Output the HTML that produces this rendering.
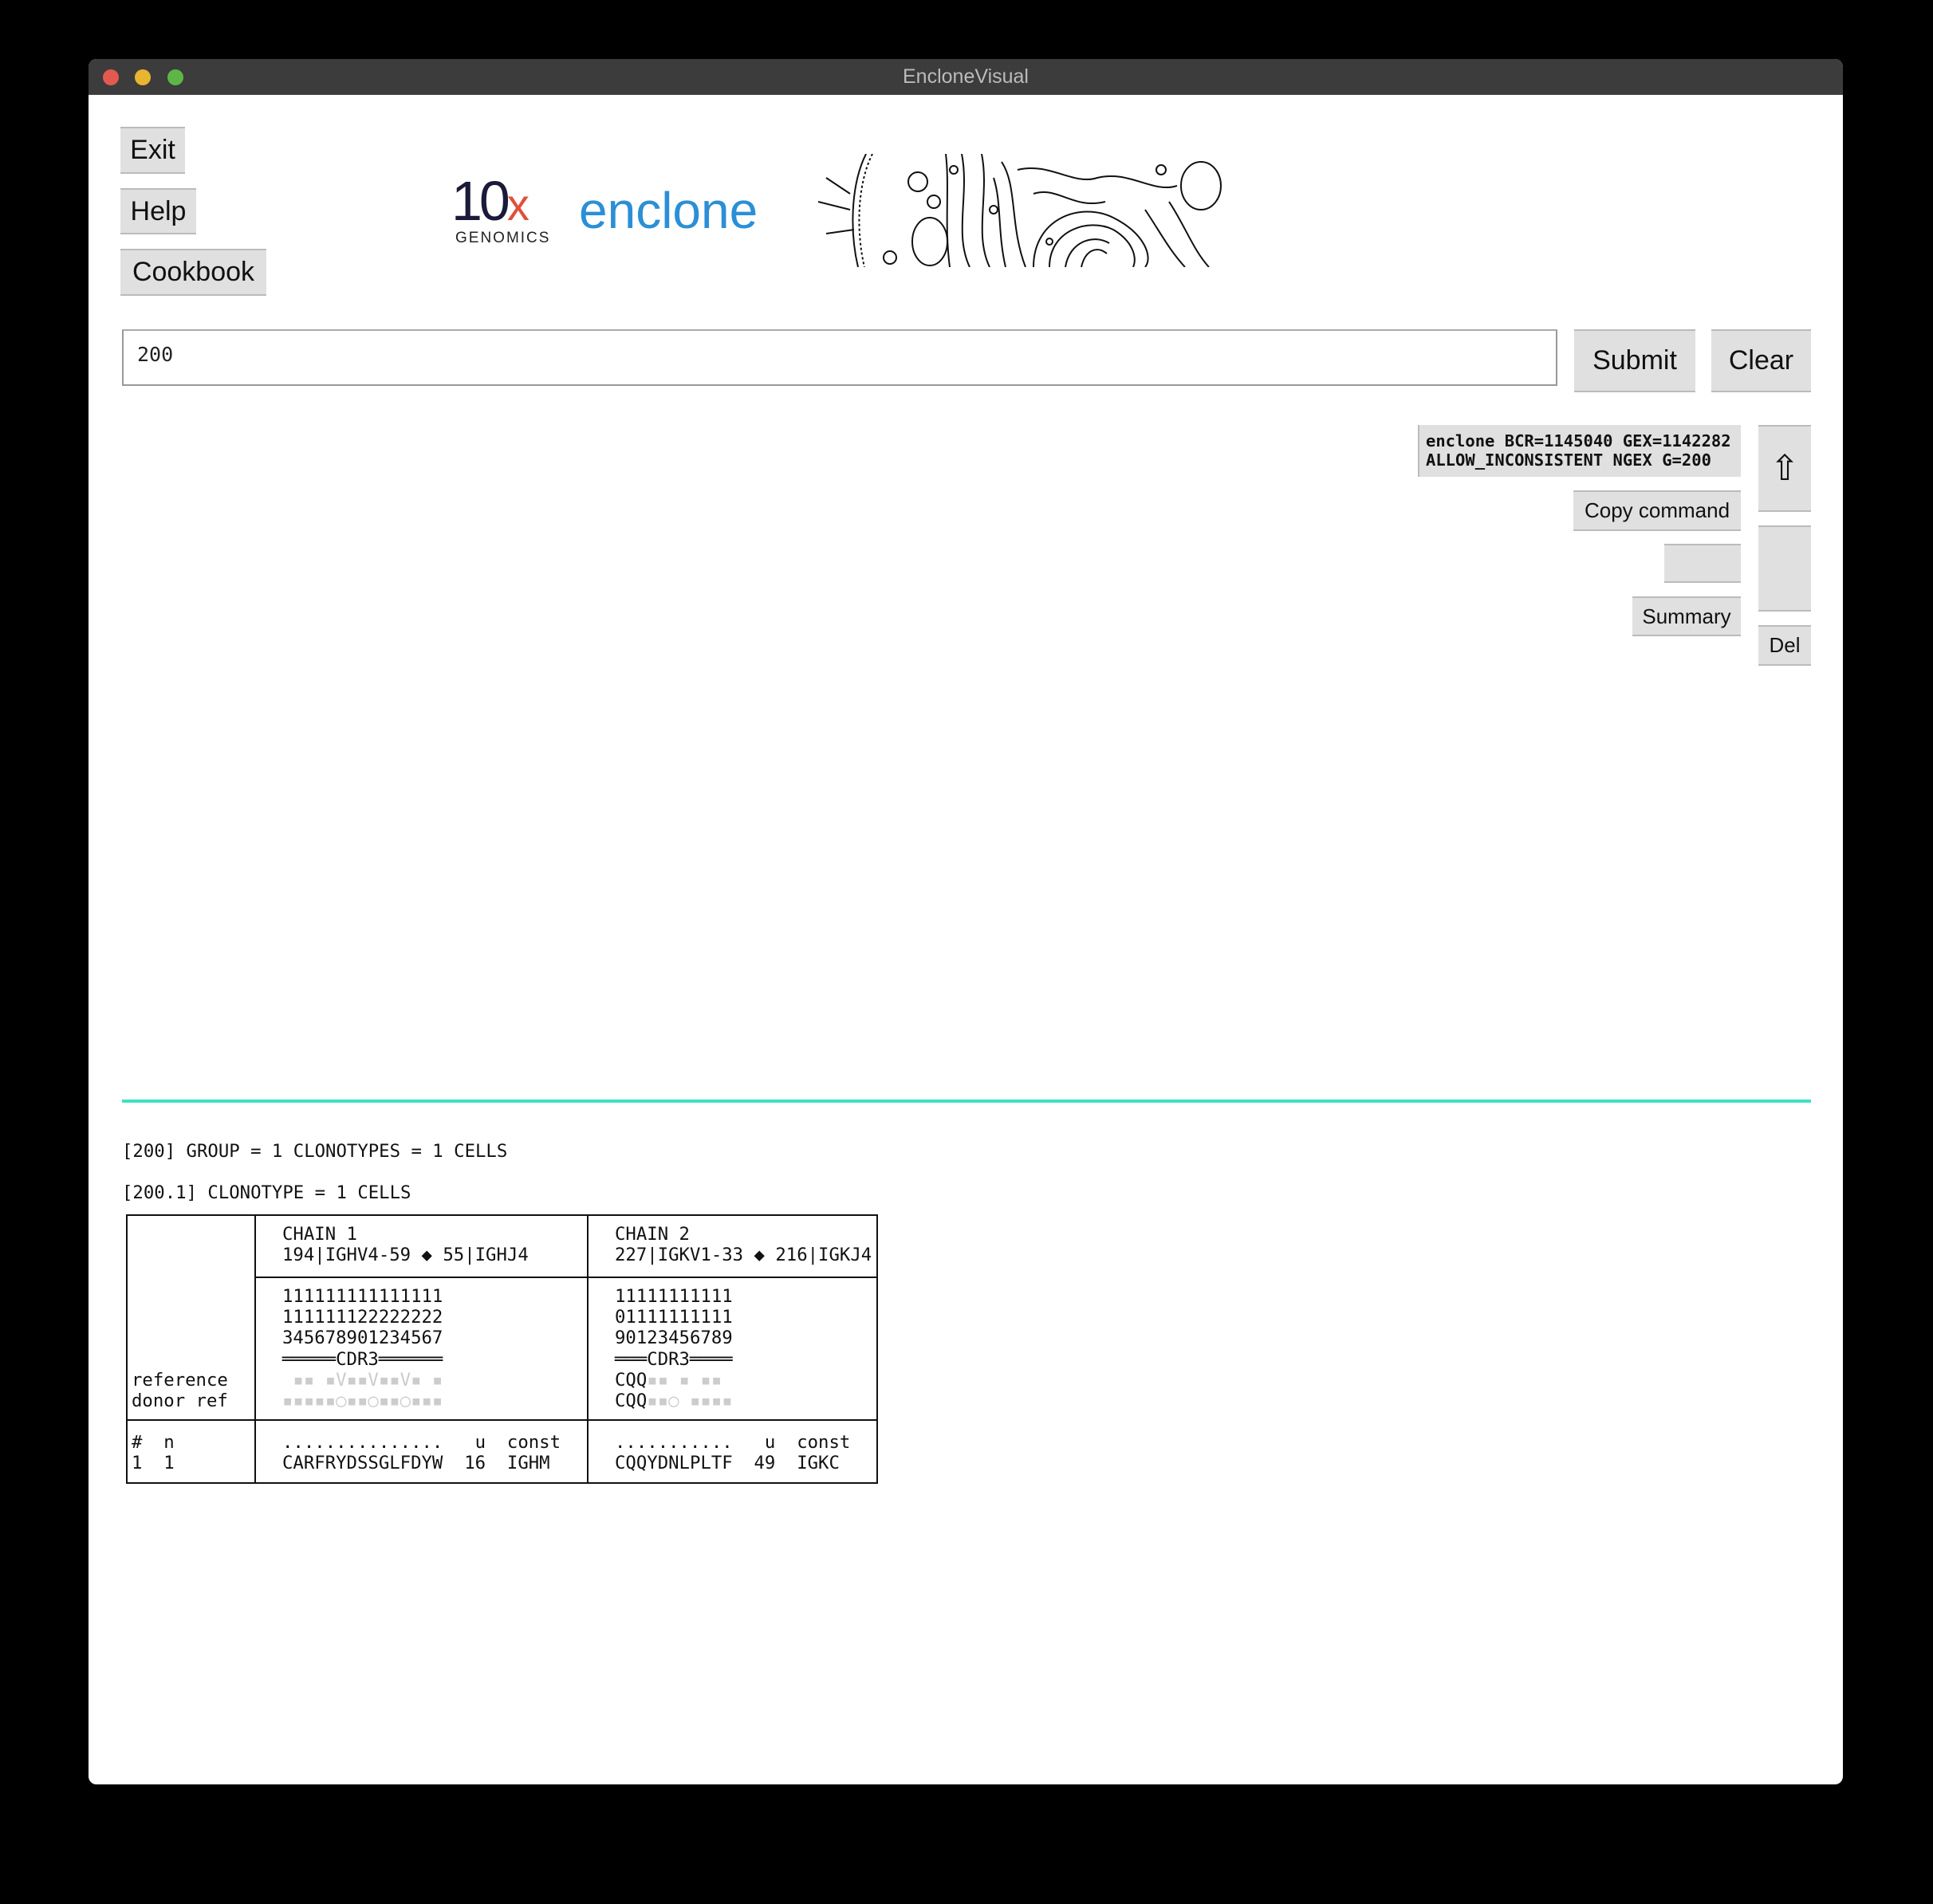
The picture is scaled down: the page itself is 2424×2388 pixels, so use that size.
<!DOCTYPE html>
<html><head><meta charset="utf-8"><style>
*{margin:0;padding:0;box-sizing:border-box}
body{width:2424px;height:2388px;background:#000;position:relative;overflow:hidden;font-family:"Liberation Sans",sans-serif}
.a{position:absolute}
.win{left:111px;top:74px;width:2200px;height:2164px;background:#fff;border-radius:10px;overflow:hidden}
.tb{left:111px;top:74px;width:2200px;height:45px;background:#3c3c3c;border-radius:10px 10px 0 0;color:#bbb;font-size:25px;text-align:center;line-height:45px}
.dot{width:20px;height:20px;border-radius:50%;top:87px}
.btn{background:#e0e0e0;border-top:2px solid #bbb;border-bottom:2px solid #bbb;color:#111;display:flex;align-items:center;justify-content:center}
.mono{font-family:"DejaVu Sans Mono","Liberation Mono",monospace}
pre{font-family:"DejaVu Sans Mono","Liberation Mono",monospace;font-size:22.3px;line-height:26.2px;color:#111;position:absolute}
.g{color:#ccc}
</style></head><body>
<div class="a win"></div>
<div class="a tb">EncloneVisual</div>
<div class="a dot" style="left:129px;background:#e25a4f"></div>
<div class="a dot" style="left:169px;background:#e8b530"></div>
<div class="a dot" style="left:210px;background:#5db646"></div>

<div class="a btn" style="left:151px;top:159px;width:81px;height:59px;font-size:34px">Exit</div>
<div class="a btn" style="left:151px;top:236px;width:95px;height:58px;font-size:34px">Help</div>
<div class="a btn" style="left:151px;top:312px;width:183px;height:59px;font-size:34px">Cookbook</div>

<div class="a" style="left:566px;top:212px;font-size:70px;color:#1a1a3a;letter-spacing:-4px;line-height:80px">10<span style="color:#e0503a;font-size:56px">x</span></div>
<div class="a" style="left:571px;top:288px;font-size:19px;color:#222;letter-spacing:2px">GENOMICS</div>
<div class="a" style="left:726px;top:224px;font-size:64px;color:#2b8fd6;line-height:80px">enclone</div>

<svg class="a" style="left:1016px;top:193px" width="518" height="142" viewBox="0 0 518 142" fill="none" stroke="#111" stroke-width="2">
<path d="M70 0 C50 40 50 100 60 142"/><path d="M78 0 C58 40 58 100 68 142" stroke-dasharray="3 3"/>
<circle cx="135" cy="35" r="12"/><circle cx="155" cy="60" r="8"/><circle cx="100" cy="130" r="8"/>
<ellipse cx="150" cy="110" rx="22" ry="30"/><ellipse cx="490" cy="40" rx="25" ry="30"/>
<path d="M190 0 C200 50 180 100 200 142M215 0 C225 50 205 100 225 142M240 10 C260 40 250 90 270 142"/>
<path d="M280 142 C280 80 340 60 380 80 C420 100 430 130 420 142"/>
<path d="M300 142 C300 95 350 80 380 95 C405 110 410 130 405 142"/>
<path d="M320 142 C325 110 355 100 375 112"/>
<path d="M260 20 C300 10 330 40 360 30 C400 20 430 50 460 40"/>
<path d="M280 50 C310 40 330 70 370 60M420 70 C440 100 450 120 470 142M450 60 C470 90 480 120 500 142"/>
<path d="M20 30 L50 50M10 60 L50 70M20 100 L55 95"/>
<path d="M340 142 C345 120 360 115 372 125M230 30 C240 60 235 100 245 142M170 0 C175 40 168 90 175 142"/>
<circle cx="230" cy="70" r="5"/><circle cx="300" cy="110" r="4"/><circle cx="440" cy="20" r="6"/><circle cx="180" cy="20" r="5"/>
</svg>

<div class="a" style="left:153px;top:413px;width:1800px;height:71px;border:2px solid #999;border-top-color:#aaa;background:#fff"></div>
<div class="a mono" style="left:172px;top:430px;font-size:25px;color:#222">200</div>
<div class="a btn" style="left:1974px;top:413px;width:152px;height:79px;font-size:34px">Submit</div>
<div class="a btn" style="left:2146px;top:413px;width:125px;height:79px;font-size:34px">Clear</div>

<div class="a" style="left:1778px;top:533px;width:405px;height:65px;background:#e0e0e0;border-left:2px solid #bbb"></div>
<pre style="left:1788px;top:541px;font-size:20.5px;line-height:24px;font-weight:bold">enclone BCR=1145040 GEX=1142282
ALLOW_INCONSISTENT NGEX G=200</pre>
<div class="a btn" style="left:1973px;top:615px;width:210px;height:51px;font-size:26px">Copy command</div>
<div class="a btn" style="left:2087px;top:682px;width:96px;height:49px"></div>
<div class="a btn" style="left:2047px;top:748px;width:136px;height:50px;font-size:26px">Summary</div>
<div class="a btn" style="left:2205px;top:533px;width:66px;height:109px;font-size:44px">⇧</div>
<div class="a btn" style="left:2205px;top:659px;width:66px;height:108px"></div>
<div class="a btn" style="left:2205px;top:784px;width:66px;height:51px;font-size:26px">Del</div>

<div class="a" style="left:153px;top:1379px;width:2118px;height:4px;background:#3fe0c4"></div>

<pre style="left:153px;top:1431px">[200] GROUP = 1 CLONOTYPES = 1 CELLS</pre>
<pre style="left:153px;top:1483px">[200.1] CLONOTYPE = 1 CELLS</pre>

<div class="a" style="left:158px;top:1523px;width:943px;height:338px;border:2px solid #111"></div>
<div class="a" style="left:319px;top:1523px;width:2px;height:338px;background:#111"></div>
<div class="a" style="left:736px;top:1523px;width:2px;height:338px;background:#111"></div>
<div class="a" style="left:319px;top:1601px;width:782px;height:2px;background:#111"></div>
<div class="a" style="left:158px;top:1780px;width:943px;height:2px;background:#111"></div>

<pre style="left:165px;top:1718px">reference
donor ref</pre>
<pre style="left:165px;top:1796px">#  n
1  1</pre>
<pre style="left:354px;top:1535px">CHAIN 1
194|IGHV4-59 ◆ 55|IGHJ4</pre>
<pre style="left:771px;top:1535px">CHAIN 2
227|IGKV1-33 ◆ 216|IGKJ4</pre>
<pre style="left:354px;top:1613px">111111111111111
111111122222222
345678901234567
═════CDR3══════
<span class="g"> ▪▪ ▪V▪▪V▪▪V▪ ▪</span>
<span class="g">▪▪▪▪▪○▪▪○▪▪○▪▪▪</span></pre>
<pre style="left:771px;top:1613px">11111111111
01111111111
90123456789
═══CDR3════
CQQ<span class="g">▪▪ ▪ ▪▪</span>
CQQ<span class="g">▪▪○ ▪▪▪▪</span></pre>
<pre style="left:354px;top:1796px">...............   u  const
CARFRYDSSGLFDYW  16  IGHM</pre>
<pre style="left:771px;top:1796px">...........   u  const
CQQYDNLPLTF  49  IGKC</pre>
</body></html>
